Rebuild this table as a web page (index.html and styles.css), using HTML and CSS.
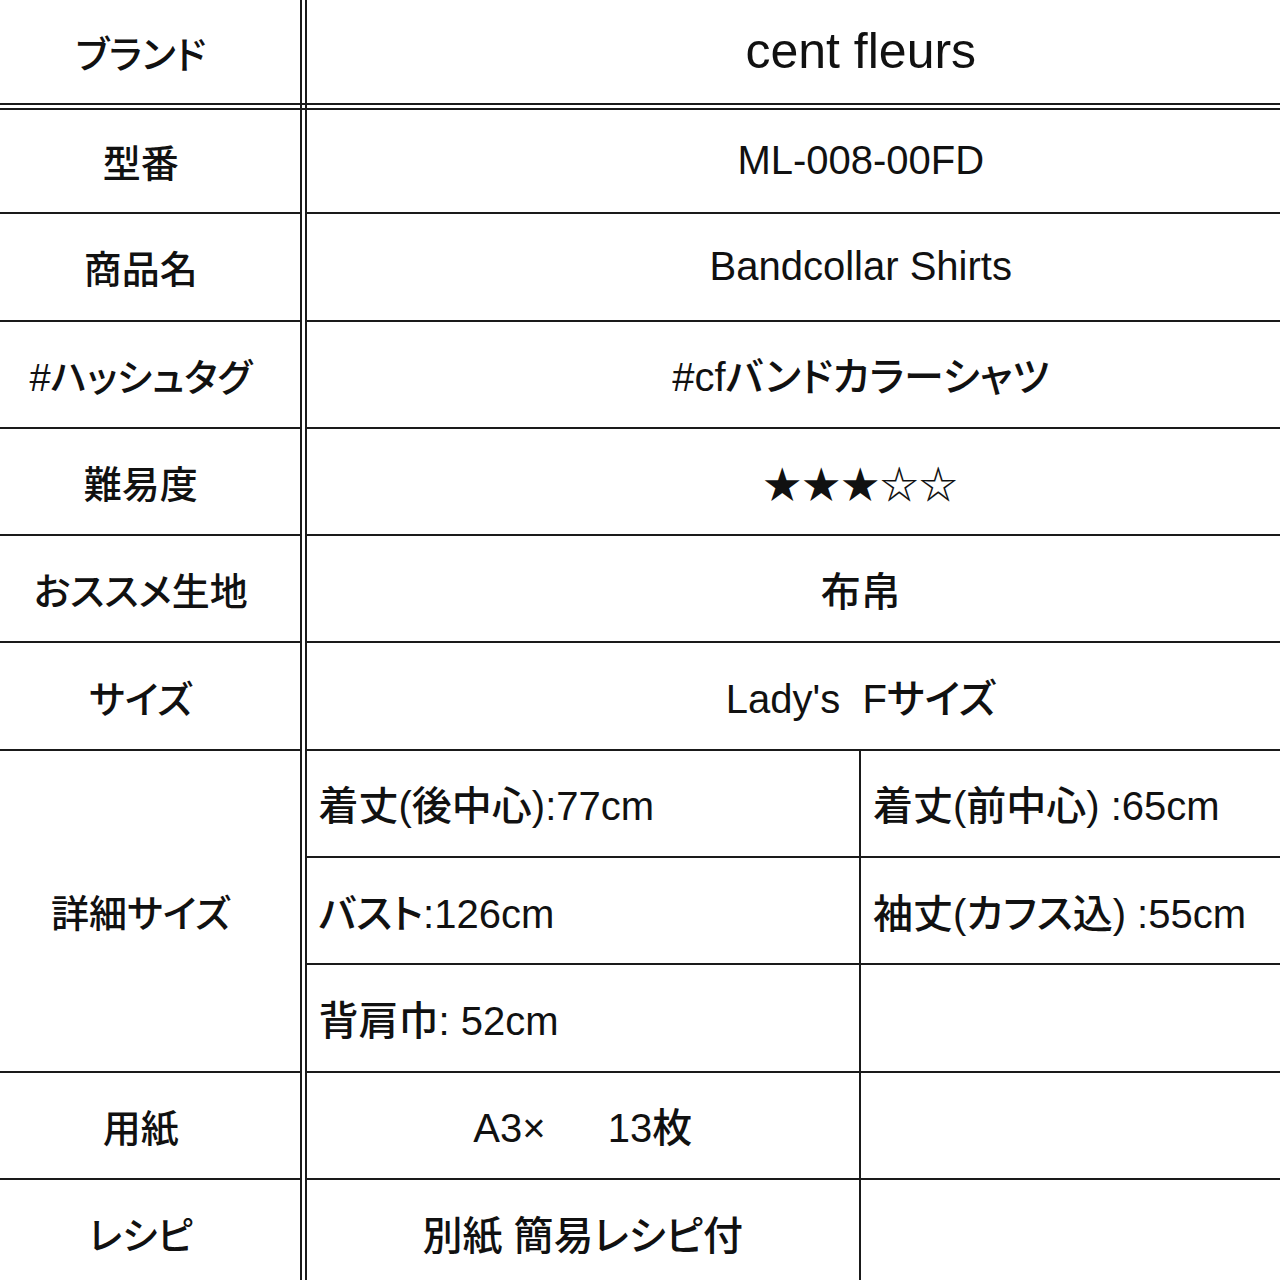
FILE: index.html
```html
<!DOCTYPE html>
<html lang="ja">
<head>
<meta charset="utf-8">
<title>cent fleurs Bandcollar Shirts</title>
<link rel="stylesheet" href="styles.css">
</head>
<body>
<table class="spec">
  <colgroup>
    <col class="c-label">
    <col class="c-mid">
    <col class="c-right">
  </colgroup>
  <tr class="r-first">
    <th>ブランド</th>
    <td colspan="2" class="brand">cent fleurs</td>
  </tr>
  <tr class="r-second">
    <th>型番</th>
    <td colspan="2">ML-008-00FD</td>
  </tr>
  <tr>
    <th>商品名</th>
    <td colspan="2">Bandcollar Shirts</td>
  </tr>
  <tr>
    <th>#ハッシュタグ</th>
    <td colspan="2">#cfバンドカラーシャツ</td>
  </tr>
  <tr>
    <th>難易度</th>
    <td colspan="2" class="stars">★★★☆☆</td>
  </tr>
  <tr>
    <th>おススメ生地</th>
    <td colspan="2">布帛</td>
  </tr>
  <tr>
    <th>サイズ</th>
    <td colspan="2" class="pre">Lady's  Fサイズ</td>
  </tr>
  <tr>
    <th rowspan="3">詳細サイズ</th>
    <td class="left">着丈(後中心):77cm</td>
    <td class="left">着丈(前中心) :65cm</td>
  </tr>
  <tr>
    <td class="left">バスト:126cm</td>
    <td class="left">袖丈(カフス込) :55cm</td>
  </tr>
  <tr>
    <td class="left">背肩巾: 52cm</td>
    <td></td>
  </tr>
  <tr>
    <th>用紙</th>
    <td class="pre">A3×　  13枚</td>
    <td></td>
  </tr>
  <tr>
    <th>レシピ</th>
    <td>別紙 簡易レシピ付</td>
    <td></td>
  </tr>
</table>
</body>
</html>
```

FILE: styles.css
```css
html, body {
  margin: 0;
  padding: 0;
  background: #ffffff;
  overflow: hidden;
}

body {
  width: 1280px;
  height: 1280px;
  font-family: "Liberation Sans", "Noto Sans CJK JP", sans-serif;
  color: #111111;
}

.spec {
  border-collapse: collapse;
  table-layout: fixed;
  width: 1416px;
}

.c-label { width: 303px; }
.c-mid { width: 557px; }
.c-right { width: 556px; }

.spec tr {
  height: 107.3px;
}

.spec tr.r-first {
  height: 106px;
}

.spec th,
.spec td {
  border: 2px solid #1a1a1a;
  padding: 0 12px;
  font-size: 40px;
  font-weight: 500;
  font-feature-settings: "palt";
  text-align: center;
  vertical-align: middle;
  white-space: nowrap;
  overflow: hidden;
}

.spec tr.r-first th,
.spec tr.r-first td {
  border-top: none;
  border-bottom: 7px double #1a1a1a;
}

.spec th {
  border-left: none;
  border-right: 7px double #1a1a1a;
  padding: 0 18px 0 0;
  font-size: 38px;
}

.spec td.brand {
  font-size: 50px;
  font-weight: 400;
}

.spec td.left {
  text-align: left;
}

.spec td.pre {
  white-space: pre;
}

.spec td.stars {
  font-family: "Noto Sans CJK JP", "DejaVu Sans", sans-serif;
  font-feature-settings: normal;
  font-size: 38px;
  letter-spacing: 1px;
}
```
